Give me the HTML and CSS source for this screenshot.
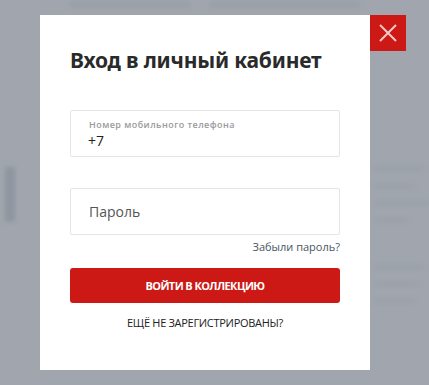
FILE: index.html
```html
<!DOCTYPE html>
<html lang="ru">
<head>
<meta charset="utf-8">
<link rel="stylesheet" href="styles.css">
</head>
<body>
<div class="backdrop">
  <div class="bg-top"><span class="bg-line w1"></span><span class="bg-line w2"></span></div>
  <div class="bg-main">
    <div class="bg-side"></div>
    <div class="bg-right">
      <span class="bg-line r1"></span>
      <span class="bg-line r2"></span>
      <span class="bg-line r3"></span>
      <span class="bg-line r4"></span>
      <span class="bg-line r5"></span>
      <span class="bg-line r6"></span>
      <span class="bg-line r7"></span>
    </div>
  </div>
</div>
<div class="modal">
  <h1 class="title">Вход в личный кабинет</h1>
  <div class="field field-phone">
    <span class="field-label">Номер мобильного телефона</span>
    <span class="field-value">+7</span>
  </div>
  <div class="field field-pass">
    <span class="field-placeholder">Пароль</span>
  </div>
  <div class="forgot-row"><a class="forgot">Забыли пароль?</a></div>
  <button class="submit">ВОЙТИ В КОЛЛЕКЦИЮ</button>
  <div class="register">ЕЩЁ НЕ ЗАРЕГИСТРИРОВАНЫ?</div>
</div>
<button class="close" aria-label="Закрыть">
  <svg width="20" height="20" viewBox="0 0 20 20"><path d="M2 2 L18 18 M18 2 L2 18" stroke="#f4c9c6" stroke-width="2" fill="none"/></svg>
</button>
</body>
</html>
```
FILE: styles.css
```css
html, body {
  margin: 0;
  padding: 0;
  width: 429px;
  height: 385px;
  overflow: hidden;
  background: #a1a6ae;
  font-family: "Open Sans", "Noto Sans", sans-serif;
}
.backdrop {
  width: 429px;
  height: 385px;
  filter: blur(2px);
  display: flex;
  flex-direction: column;
}
.bg-top {
  display: flex;
  gap: 20px;
  padding: 2px 0 0 70px;
  height: 10px;
}
.bg-line {
  display: block;
  height: 5px;
  background: #989ea6;
}
.w1 { width: 120px; }
.w2 { width: 150px; }
.bg-main {
  display: flex;
  justify-content: space-between;
  flex: 1;
}
.bg-side {
  width: 10px;
  height: 55px;
  margin: 155px 0 0 5px;
  background: #8f96a0;
}
.bg-right {
  width: 55px;
  display: flex;
  flex-direction: column;
  padding-top: 155px;
  gap: 13px;
}
.r1 { width: 50px; }
.r2 { width: 40px; }
.r3 { width: 55px; }
.r4 { width: 35px; }
.r5 { width: 50px; margin-top: 30px; }
.r6 { width: 45px; }
.r7 { width: 40px; }
.bg-right .bg-line { height: 4px; background: #9aa0a8; }

.modal {
  position: absolute;
  left: 40px;
  top: 15px;
  width: 330px;
  height: 355px;
  box-sizing: border-box;
  padding: 30px 30px 0 30px;
  background: #ffffff;
  display: flex;
  flex-direction: column;
}
.title {
  margin: 0;
  font-family: "Noto Sans", sans-serif;
  font-weight: 700;
  font-size: 21px;
  line-height: 30px;
  color: #2a2a2a;
  letter-spacing: -0.2px;
}
.field {
  height: 47px;
  box-sizing: border-box;
  border: 1px solid #e4e5e7;
  border-radius: 2px;
  padding: 0 18px;
  display: flex;
  flex-direction: column;
  justify-content: center;
}
.field-phone {
  margin-top: 35px;
  padding-top: 3px;
}
.field-label {
  font-size: 9px;
  line-height: 12px;
  color: #9a9a9a;
  font-weight: 600;
  letter-spacing: 0.45px;
}
.field-value {
  font-size: 14px;
  line-height: 20px;
  color: #222;
  margin-left: -1px;
}
.field-pass {
  margin-top: 31px;
}
.field-placeholder {
  font-size: 14px;
  color: #555;
}
.forgot-row {
  display: flex;
  justify-content: flex-end;
  margin-top: 4px;
}
.forgot {
  font-size: 11px;
  line-height: 15px;
  color: #485664;
}
.submit {
  margin-top: 14px;
  height: 35px;
  border: none;
  border-radius: 3px;
  background: #cc1916;
  color: #fff;
  font-family: "Open Sans", sans-serif;
  font-weight: 700;
  font-size: 11px;
  letter-spacing: -0.6px;
  padding: 0;
}
.register {
  margin-top: 12px;
  text-align: center;
  font-size: 11px;
  line-height: 16px;
  color: #222;
  letter-spacing: -0.3px;
}
.close {
  position: absolute;
  left: 370px;
  top: 15px;
  width: 36px;
  height: 36px;
  border: none;
  padding: 0;
  background: #cc1916;
  display: flex;
  align-items: center;
  justify-content: center;
}
```
